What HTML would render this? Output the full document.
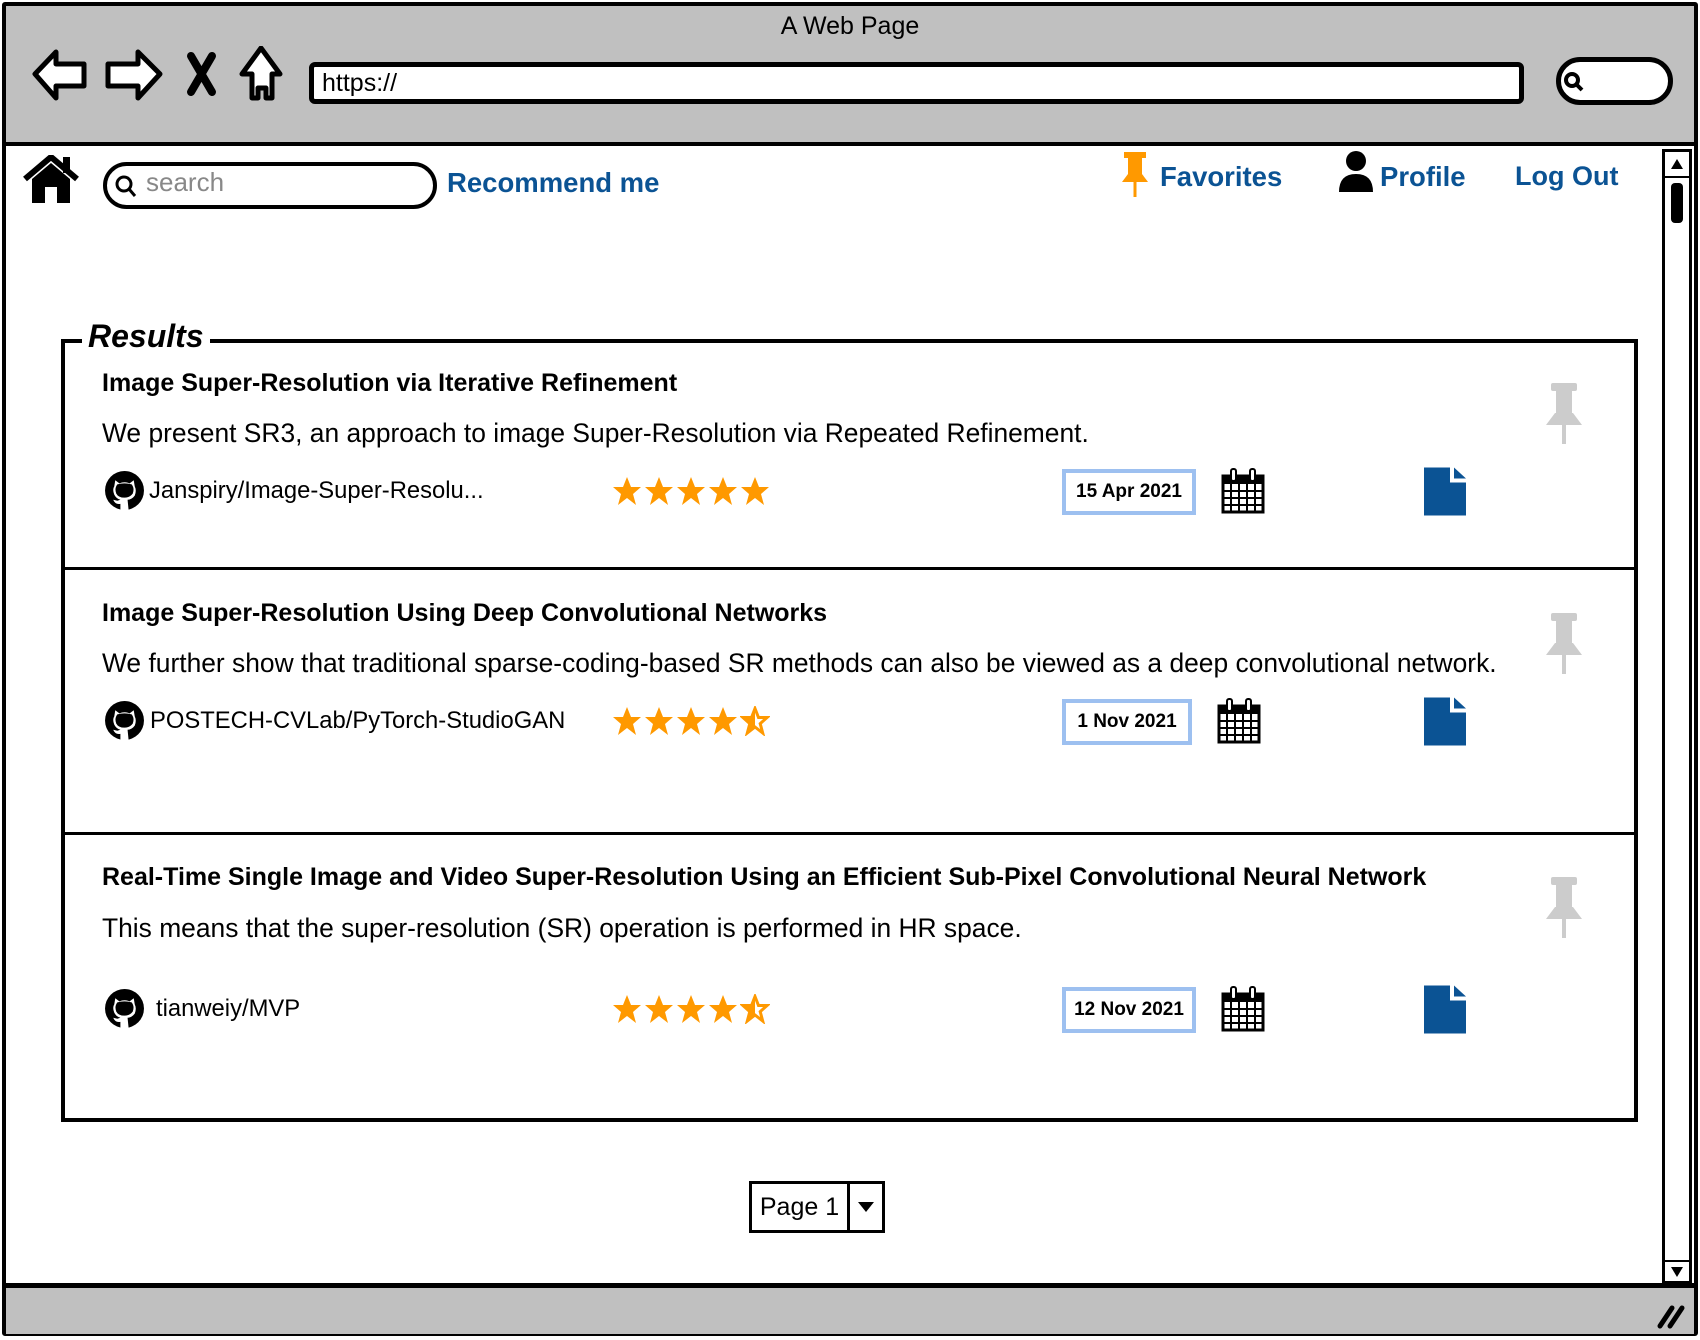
<!DOCTYPE html>
<html><head><meta charset="utf-8"><style>
*{margin:0;padding:0;box-sizing:border-box}
body{width:1700px;height:1340px;background:#fff;font-family:"Liberation Sans",sans-serif;position:relative;overflow:hidden;color:#000}
.a{position:absolute}
.blue{color:#0b5394;font-weight:bold}
.t{font-size:25px;font-weight:bold;white-space:nowrap}
.d{font-size:26.4px;white-space:nowrap}
.g{font-size:23.8px;white-space:nowrap}
.date{border:4px solid #9dc0f0;font-size:19px;font-weight:bold;display:flex;align-items:center;justify-content:center;width:134px;height:46px}
</style></head><body>
<div class="a" style="left:2px;top:2px;width:1696px;height:1334px;border:4px solid #000;border-radius:3px"></div>
<div class="a" style="left:6px;top:6px;width:1688px;height:140px;background:#c0c0c0;border-bottom:4px solid #000"></div>
<div class="a" style="left:0;top:12px;width:1700px;text-align:center;font-size:25px">A Web Page</div>
<svg class="a" style="left:30px;top:46px" width="260" height="60" viewBox="0 0 260 60">
<path d="M5 28 L26 6 L26 18 L54 18 L54 40 L26 40 L26 52 Z" fill="#fff" stroke="#000" stroke-width="5" stroke-linejoin="round"/>
<path d="M130 28 L108 6 L108 18 L78 18 L78 40 L108 40 L108 52 Z" fill="#fff" stroke="#000" stroke-width="5" stroke-linejoin="round"/>
<path d="M161 10 L182 46 M182 10 L161 46" stroke="#000" stroke-width="8" stroke-linecap="round"/>
<path d="M231 2 L250 28 L242 28 L242 52 L236 52 L236 42 L228 42 L228 52 L222 52 L222 28 L212 28 Z" fill="#fff" stroke="#000" stroke-width="5" stroke-linejoin="round"/>
</svg>
<div class="a" style="left:309px;top:62px;width:1215px;height:42px;background:#fff;border:5px solid #000;border-radius:6px;font-size:25px;padding:2px 8px">https://</div>
<div class="a" style="left:1556px;top:57px;width:117px;height:48px;background:#fff;border:5px solid #000;border-radius:24px"></div>
<svg class="a" style="left:1562px;top:70px" width="24" height="24"><circle cx="10" cy="10" r="6" fill="none" stroke="#000" stroke-width="4"/><path d="M14 14 L20 20" stroke="#000" stroke-width="4"/></svg>
<div class="a" style="left:6px;top:1283px;width:1688px;height:51px;background:#c0c0c0;border-top:5px solid #000"></div>
<svg class="a" style="left:1652px;top:1300px" width="36" height="30"><path d="M8 26 L20 8 M18 26 L30 8" stroke="#000" stroke-width="5" stroke-linecap="round"/></svg>
<div class="a" style="left:1662px;top:149px;width:30px;height:1135px;border:3px solid #000;background:#fff"></div>
<svg class="a" style="left:1662px;top:149px" width="30" height="1135"><path d="M9 20 L15 10 L21 20 Z" fill="#000"/><path d="M3 28 L27 28" stroke="#000" stroke-width="2"/><rect x="9" y="34" width="12" height="40" rx="4" fill="#000"/><path d="M3 1112 L27 1112" stroke="#000" stroke-width="2"/><path d="M9 1118 L15 1128 L21 1118 Z" fill="#000"/></svg>
<svg class="a" style="left:22px;top:155px" width="58" height="50" viewBox="0 0 58 50"><path d="M3 24 L29 2 L55 24" fill="none" stroke="#000" stroke-width="6"/><path d="M10 24 L29 8 L48 24 L48 48 L35 48 L35 32 L23 32 L23 48 L10 48 Z" fill="#000"/><rect x="41" y="2" width="7" height="16" fill="#000"/></svg>
<div class="a" style="left:103px;top:162px;width:334px;height:47px;border:4px solid #000;border-radius:24px"></div>
<svg class="a" style="left:113px;top:173px" width="26" height="26"><circle cx="11" cy="11" r="7" fill="none" stroke="#000" stroke-width="3"/><path d="M16 16 L22 23" stroke="#000" stroke-width="3"/></svg>
<div class="a" style="left:146px;top:167px;font-size:26px;color:#888">search</div>
<div class="a blue" style="left:447px;top:167px;font-size:27.5px">Recommend me</div>
<svg class="a" style="left:1118px;top:150px" width="34" height="48" viewBox="0 0 34 48"><rect x="6" y="2" width="22" height="6" fill="#f90"/><rect x="10" y="6" width="14" height="20" fill="#f90"/><path d="M4 32 L10 24 L24 24 L30 32 Z" fill="#f90"/><path d="M17 32 L17 47" stroke="#f90" stroke-width="3"/></svg>
<div class="a blue" style="left:1160px;top:161px;font-size:27.5px">Favorites</div>
<svg class="a" style="left:1337px;top:150px" width="38" height="44" viewBox="0 0 38 44"><circle cx="19" cy="11" r="10" fill="#000"/><path d="M2 42 Q2 24 19 24 Q36 24 36 42 Z" fill="#000"/></svg>
<div class="a blue" style="left:1380px;top:161px;font-size:27.5px">Profile</div>
<div class="a blue" style="left:1515px;top:161px;font-size:27px">Log Out</div>
<div class="a" style="left:61px;top:339px;width:1577px;height:783px;border:4px solid #000"></div>
<div class="a" style="left:82px;top:318px;background:#fff;padding:0 6px;font-size:32px;font-weight:bold;font-style:italic">Results</div>
<div class="a" style="left:63px;top:567px;width:1573px;height:3px;background:#000"></div>
<div class="a" style="left:63px;top:832px;width:1573px;height:3px;background:#000"></div>

<svg width="0" height="0" style="position:absolute"><defs>
<symbol id="st" viewBox="0 0 30 30"><path d="M15 1 L19 11 L29 11 L21 18 L24 29 L15 22 L6 29 L9 18 L1 11 L11 11 Z" fill="#f90"/></symbol>
<symbol id="hs" viewBox="0 0 30 30"><path d="M15 2.5 L18.5 11.5 L27 11.5 L20.2 17.6 L22.7 27 L15 21 L7.3 27 L9.8 17.6 L3 11.5 L11.5 11.5 Z" fill="#fff" stroke="#f90" stroke-width="3"/><path d="M15 1 L15 22 L6 29 L9 18 L1 11 L11 11 Z" fill="#f90"/></symbol>
<symbol id="gh" viewBox="0 0 40 40"><circle cx="20" cy="20" r="19" fill="#000"/><path d="M11 10 L15 13 Q20 11 25 13 L29 10 L30 16 Q32 20 30 25 Q27 29 23 29 L24 39 L16 39 L16 33 Q11 34 9 29 L13 30 L16 29 Q12 28 10 24 Q8 19 10 16 Z" fill="#fff"/><path d="M13 14 Q20 12 27 14 Q30 18 28 23 Q25 27 20 27 Q14 27 12 23 Q10 18 13 14 Z" fill="#000"/></symbol>
<symbol id="cal" viewBox="0 0 44 46"><rect x="2" y="8" width="40" height="36" fill="#fff" stroke="#000" stroke-width="3"/><rect x="2" y="8" width="40" height="8" fill="#000"/><rect x="10" y="1" width="5" height="12" rx="2" fill="#fff" stroke="#000" stroke-width="2"/><rect x="29" y="1" width="5" height="12" rx="2" fill="#fff" stroke="#000" stroke-width="2"/><path d="M2 23 H42 M2 30 H42 M2 37 H42 M10 16 V44 M18 16 V44 M26 16 V44 M34 16 V44" stroke="#000" stroke-width="2"/></symbol>
<symbol id="doc" viewBox="0 0 42 48"><path d="M0 0 H26 V15 H42 V48 H0 Z" fill="#0b5394"/><path d="M30 0 L42 11 H30 Z" fill="#0b5394"/></symbol>
<symbol id="pin" viewBox="0 0 42 62"><rect x="8" y="0" width="26" height="8" rx="2" fill="#ccc"/><rect x="13" y="6" width="16" height="26" fill="#ccc"/><path d="M3 42 L12 30 L30 30 L39 42 Z" fill="#ccc"/><path d="M21 42 L21 61" stroke="#ccc" stroke-width="4"/></symbol>
</defs></svg>

<div class="a t" style="left:102px;top:369px">Image Super-Resolution via Iterative Refinement</div>
<div class="a d" style="left:102px;top:418px">We present SR3, an approach to image Super-Resolution via Repeated Refinement.</div>
<svg class="a" style="left:104px;top:470px" width="41" height="41"><use href="#gh"/></svg>
<div class="a g" style="left:149px;top:477px">Janspiry/Image-Super-Resolu...</div>
<div class="a" style="left:612px;top:476px;display:flex;gap:2px"><svg width="30" height="30"><use href="#st"/></svg><svg width="30" height="30"><use href="#st"/></svg><svg width="30" height="30"><use href="#st"/></svg><svg width="30" height="30"><use href="#st"/></svg><svg width="30" height="30"><use href="#st"/></svg></div>
<div class="a date" style="left:1062px;top:469px">15 Apr 2021</div>
<svg class="a" style="left:1221px;top:467px" width="44" height="48"><use href="#cal"/></svg>
<svg class="a" style="left:1424px;top:467px" width="42" height="49"><use href="#doc"/></svg>
<svg class="a" style="left:1543px;top:383px" width="42" height="62"><use href="#pin"/></svg>

<div class="a t" style="left:102px;top:599px">Image Super-Resolution Using Deep Convolutional Networks</div>
<div class="a d" style="left:102px;top:648px">We further show that traditional sparse-coding-based SR methods can also be viewed as a deep convolutional network.</div>
<svg class="a" style="left:104px;top:700px" width="41" height="41"><use href="#gh"/></svg>
<div class="a g" style="left:150px;top:707px">POSTECH-CVLab/PyTorch-StudioGAN</div>
<div class="a" style="left:612px;top:706px;display:flex;gap:2px"><svg width="30" height="30"><use href="#st"/></svg><svg width="30" height="30"><use href="#st"/></svg><svg width="30" height="30"><use href="#st"/></svg><svg width="30" height="30"><use href="#st"/></svg><svg width="30" height="30"><use href="#hs"/></svg></div>
<div class="a date" style="left:1062px;top:699px;width:130px">1 Nov 2021</div>
<svg class="a" style="left:1217px;top:697px" width="44" height="48"><use href="#cal"/></svg>
<svg class="a" style="left:1424px;top:697px" width="42" height="49"><use href="#doc"/></svg>
<svg class="a" style="left:1543px;top:613px" width="42" height="62"><use href="#pin"/></svg>

<div class="a t" style="left:102px;top:863px">Real-Time Single Image and Video Super-Resolution Using an Efficient Sub-Pixel Convolutional Neural Network</div>
<div class="a d" style="left:102px;top:913px">This means that the super-resolution (SR) operation is performed in HR space.</div>
<svg class="a" style="left:104px;top:988px" width="41" height="41"><use href="#gh"/></svg>
<div class="a g" style="left:156px;top:995px">tianweiy/MVP</div>
<div class="a" style="left:612px;top:994px;display:flex;gap:2px"><svg width="30" height="30"><use href="#st"/></svg><svg width="30" height="30"><use href="#st"/></svg><svg width="30" height="30"><use href="#st"/></svg><svg width="30" height="30"><use href="#st"/></svg><svg width="30" height="30"><use href="#hs"/></svg></div>
<div class="a date" style="left:1062px;top:987px">12 Nov 2021</div>
<svg class="a" style="left:1221px;top:985px" width="44" height="48"><use href="#cal"/></svg>
<svg class="a" style="left:1424px;top:985px" width="42" height="49"><use href="#doc"/></svg>
<svg class="a" style="left:1543px;top:877px" width="42" height="62"><use href="#pin"/></svg>

<div class="a" style="left:749px;top:1181px;width:136px;height:52px;border:3px solid #000;display:flex">
<div style="width:98px;border-right:3px solid #000;font-size:25px;line-height:46px;text-align:center">Page 1</div>
<div style="flex:1;display:flex;align-items:center;justify-content:center"><svg width="16" height="10"><path d="M0 0 H16 L8 10 Z" fill="#000"/></svg></div>
</div>
</body></html>
